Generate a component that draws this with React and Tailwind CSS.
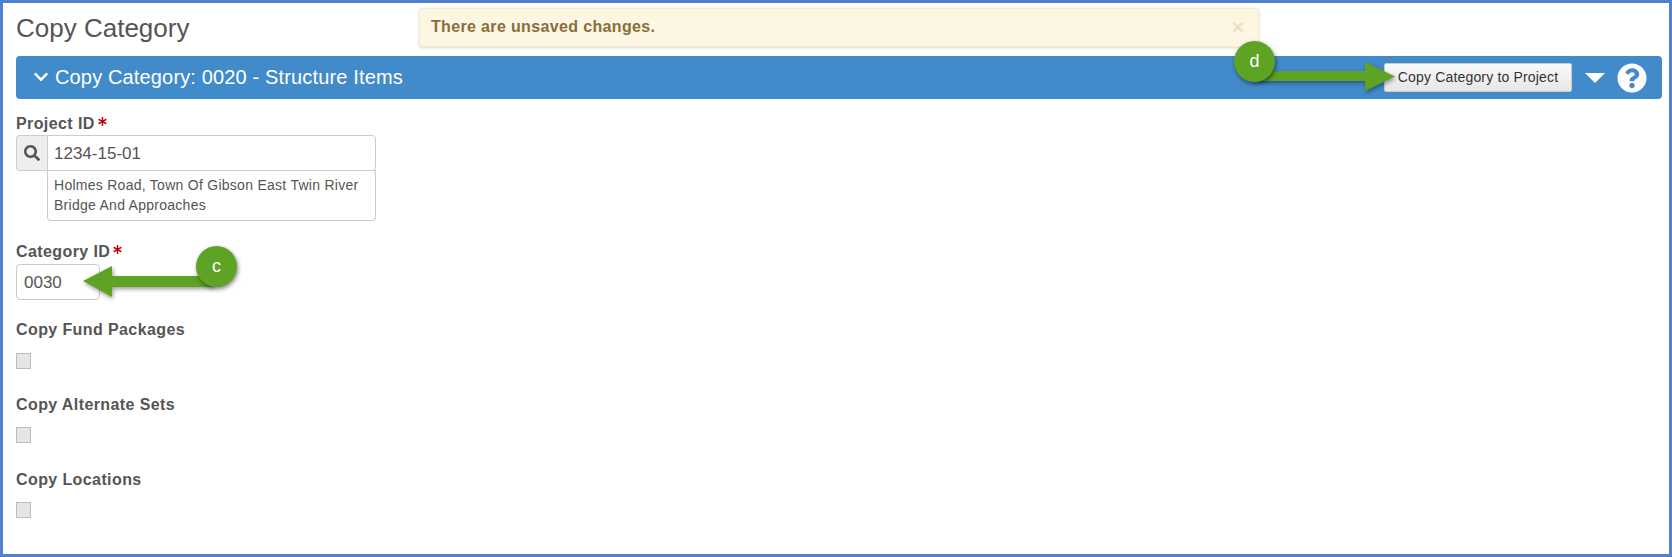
import { FaChevronDown, FaQuestionCircle, FaSearch, FaAsterisk } from 'react-icons/fa'

function Label({ children, required }) {
  return (
    <div className="flex items-start h-[20px] text-[16px] leading-[20px] font-bold tracking-[0.4px] text-[#555555]">
      {children}
      {required && <FaAsterisk className="text-[#c00000] text-[9px] ml-[3px] mt-[3px]" />}
    </div>
  )
}

function Checkbox() {
  return <div className="w-[15px] h-[16px] bg-[#e6e6e6] border border-[#bdbdbd]" />
}

function Callout({ letter, className }) {
  return (
    <div
      className={`absolute w-[41px] h-[41px] rounded-full bg-[#5fa324] text-white text-[18px] flex items-center justify-center shadow-[1px_2px_4px_rgba(0,0,0,0.5)] ${className}`}
    >
      {letter}
    </div>
  )
}

export default function App() {
  return (
    <div className="relative h-[557px] border-[3px] border-[#4f81d0] bg-white font-['Liberation_Sans',Arial,sans-serif] text-[#555555] overflow-hidden">
      {/* Header */}
      <div className="h-[53px] pl-[13px] pt-[12px] flex items-start">
        <h1 className="w-[403px] text-[26px] leading-[27px] text-[#555555]">Copy Category</h1>
        <div className="w-[840px] h-[39px] -mt-[7px] pb-[2px] flex items-center justify-between pl-[11px] pr-[14px] bg-[#fdf6e3] border border-[#faebcc] rounded-[4px] shadow-[0_1px_3px_rgba(0,0,0,0.15)]">
          <span className="text-[16px] font-bold tracking-[0.35px] text-[#8a6d3b]">There are unsaved changes.</span>
          <span className="text-[21px] leading-none font-bold text-[#eadfc0]">×</span>
        </div>
      </div>

      {/* Panel bar */}
      <div className="ml-[13px] mr-[7px] h-[43px] bg-[#428bca] rounded-[4px] flex items-center text-white">
        <FaChevronDown className="ml-[17px] mb-[2px] text-[16px]" />
        <span className="ml-[6px] mb-[2px] text-[20px] tracking-[0.15px]">Copy Category: 0020 - Structure Items</span>
        <div className="ml-auto flex items-center">
          <button className="w-[188px] h-[29px] bg-gradient-to-b from-[#fafafa] to-[#e6e6e6] border border-[#cccccc] rounded-[2px] text-[14px] tracking-[0.17px] text-[#333333]">
            Copy Category to Project
          </button>
          <svg viewBox="0 0 20 10" className="w-[20px] h-[10px] ml-[13px]">
            <path d="M0 0h20L10 10z" fill="#fff" />
          </svg>
          <FaQuestionCircle className="text-[30px] ml-[12px] mr-[15px]" />
        </div>
      </div>

      {/* Form */}
      <div className="pl-[13px] pt-[15px]">
        <Label required>Project ID</Label>
        <div className="mt-[1px] w-[360px] flex h-[36px]">
          <div className="w-[31px] bg-[#eeeeee] border border-[#cccccc] border-r-0 rounded-l-[4px] flex items-center justify-center text-[#555555]">
            <FaSearch className="text-[16px]" />
          </div>
          <div className="flex-1 border border-[#cccccc] rounded-r-[4px] pl-[6px] text-[17px] leading-[36px]">
            1234-15-01
          </div>
        </div>
        <div className="ml-[31px] w-[329px] h-[51px] -mt-[1px] border border-[#cccccc] [border-top-style:dashed] rounded-b-[4px] px-[6px] pt-[4px] text-[14px] tracking-[0.27px] leading-[20px]">
          Holmes Road, Town Of Gibson East Twin River Bridge And Approaches
        </div>

        <div className="mt-[21px]">
          <Label required>Category ID</Label>
        </div>
        <div className="mt-[2px] w-[84px] h-[36px] border border-[#cccccc] rounded-[4px] pl-[7px] text-[17px] leading-[36px]">
          0030
        </div>

        <div className="mt-[20px]">
          <Label>Copy Fund Packages</Label>
        </div>
        <div className="mt-[13px]">
          <Checkbox />
        </div>

        <div className="mt-[26px]">
          <Label>Copy Alternate Sets</Label>
        </div>
        <div className="mt-[12px]">
          <Checkbox />
        </div>

        <div className="mt-[27px]">
          <Label>Copy Locations</Label>
        </div>
        <div className="mt-[12px]">
          <Checkbox />
        </div>
      </div>

      {/* Callouts */}
      <svg viewBox="0 0 170 40" className="absolute left-[1232px] top-[56px] w-[170px] h-[40px] drop-shadow-[1px_2px_2px_rgba(0,0,0,0.4)]">
        <path d="M22 12h108V3l30 14.500-30 14.500V22H22z" fill="#5fa324" />
      </svg>
      <Callout letter="d" className="left-[1231px] top-[38px]" />

      <svg viewBox="0 0 130 32" className="absolute left-[80px] top-[263px] w-[130px] h-[32px] drop-shadow-[1px_2px_2px_rgba(0,0,0,0.4)]">
        <path d="M0 15L29 0v10h101v11H29v10z" fill="#5fa324" />
      </svg>
      <Callout letter="c" className="left-[193px] top-[243px]" />
    </div>
  )
}
